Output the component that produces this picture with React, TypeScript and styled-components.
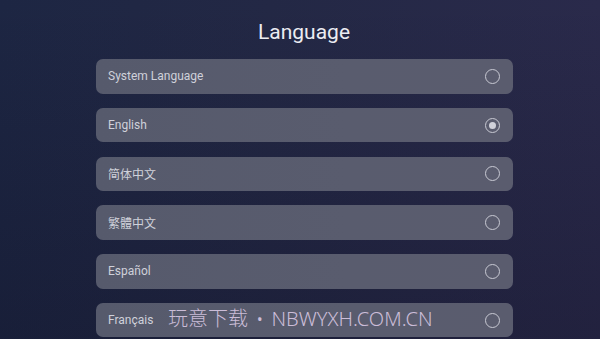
import React from 'react';
import styled, { createGlobalStyle } from 'styled-components';

const GlobalStyle = createGlobalStyle`
  html, body {
    margin: 0;
    padding: 0;
    background: #1e2440;
  }
`;

const Screen = styled.div`
  position: relative;
  width: 600px;
  height: 339px;
  overflow: hidden;
  box-sizing: border-box;
  padding-top: 18px;
  background:
    linear-gradient(180deg, rgba(0, 0, 0, 0) 0%, rgba(10, 8, 25, 0.25) 100%),
    linear-gradient(90deg, #1d2643 0%, #232845 45%, #2a2a4b 100%);
  font-family: Roboto, "Noto Sans", sans-serif;
`;

const Title = styled.h1`
  margin: 0;
  height: 28px;
  line-height: 28px;
  text-align: center;
  font-size: 21px;
  font-weight: 400;
  color: #ebecf2;
  padding-left: 8px;
`;

const List = styled.div`
  display: flex;
  flex-direction: column;
  gap: 14.3px;
  width: 417px;
  margin: 13px 0 0 96px;
`;

const Row = styled.div`
  display: flex;
  align-items: center;
  justify-content: space-between;
  height: 34.5px;
  box-sizing: border-box;
  padding: 0 13px 0 12px;
  border-radius: 7px;
  background: linear-gradient(90deg, #565a6c 0%, #595c6e 60%, #5a5c6e 100%);
`;

const Label = styled.span`
  font-size: 12px;
  color: #cfd1da;
  font-family: Roboto, "Noto Sans CJK SC", sans-serif;
`;

const Radio = styled.span<{ $checked?: boolean }>`
  position: relative;
  width: 15px;
  height: 15px;
  box-sizing: border-box;
  border-radius: 50%;
  border: 1.6px solid #c8c9d3;

  &::after {
    content: '';
    display: ${(p) => (p.$checked ? 'block' : 'none')};
    position: absolute;
    left: 50%;
    top: 50%;
    width: 7px;
    height: 7px;
    margin: -3.5px 0 0 -3.5px;
    border-radius: 50%;
    background: #cfd0d9;
  }
`;

const Watermark = styled.div`
  position: absolute;
  left: 168px;
  top: 306px;
  font-family: "Noto Sans", "Noto Sans CJK SC", sans-serif;
  font-weight: 300;
  font-size: 20px;
  line-height: 26px;
  color: #cbbdd8;
  white-space: nowrap;
  pointer-events: none;
`;

const Dot = styled.span`
  margin: 0 8px;
`;

const languages = [
  { name: 'System Language', checked: false },
  { name: 'English', checked: true },
  { name: '简体中文', checked: false },
  { name: '繁體中文', checked: false },
  { name: 'Español', checked: false },
  { name: 'Français', checked: false },
];

const App = () => {
  return (
    <>
      <GlobalStyle />
      <Screen>
        <Title>Language</Title>
        <List>
          {languages.map((lang) => (
            <Row key={lang.name}>
              <Label>{lang.name}</Label>
              <Radio $checked={lang.checked} />
            </Row>
          ))}
        </List>
        <Watermark>
          玩意下载<Dot>•</Dot>NBWYXH.COM.CN
        </Watermark>
      </Screen>
    </>
  );
};

export default App;
